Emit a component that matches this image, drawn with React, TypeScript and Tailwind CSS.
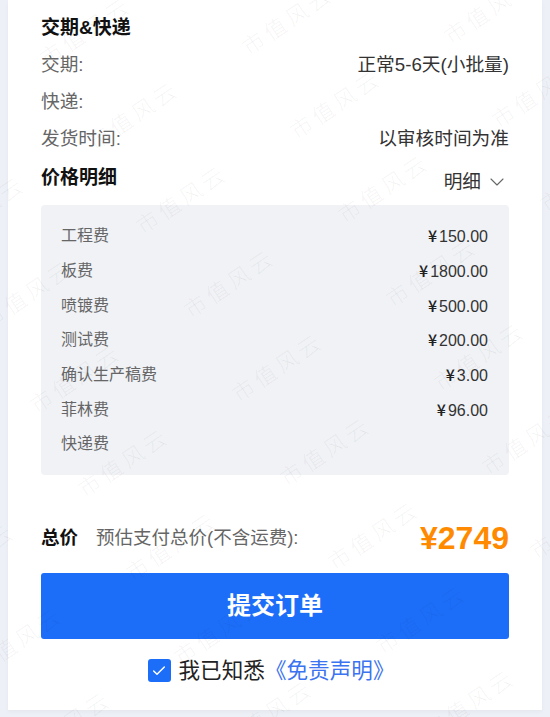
import { ChevronDown, Check } from 'lucide-react';

const delivery = [
  { label: '交期:', value: '正常5-6天(小批量)' },
  { label: '快递:', value: '' },
  { label: '发货时间:', value: '以审核时间为准' },
];

const fees = [
  { label: '工程费', value: '150.00' },
  { label: '板费', value: '1800.00' },
  { label: '喷镀费', value: '500.00' },
  { label: '测试费', value: '200.00' },
  { label: '确认生产稿费', value: '3.00' },
  { label: '菲林费', value: '96.00' },
  { label: '快递费', value: '' },
];

// watermark lattice, staggered like the original tiling
const marks: { x: number; y: number }[] = [];
for (let i = -4; i <= 4; i++) {
  for (let j = -6; j <= 8; j++) {
    const x = 182 + i * 250 + j * 48;
    const y = 200 + i * 73 + j * 84;
    if (x > -80 && x < 630 && y > -60 && y < 780) marks.push({ x, y });
  }
}

function Watermark() {
  return (
    <div className="pointer-events-none absolute inset-0 overflow-hidden">
      {marks.map((m, k) => (
        <span
          key={k}
          className="absolute -translate-x-1/2 -translate-y-1/2 -rotate-[34deg] whitespace-nowrap text-[22px] font-light tracking-[4px] text-black/[0.06]"
          style={{ left: m.x, top: m.y }}
        >
          市值风云
        </span>
      ))}
    </div>
  );
}

export default function App() {
  return (
    <div className="relative h-[717px] overflow-hidden bg-[#eef0f7] font-['Liberation_Sans','Noto_Sans_CJK_SC',sans-serif]">
      <div className="ml-2 w-[534px] bg-white px-[33px] pb-[23px] pt-[10px] shadow-[0_2px_4px_rgba(0,0,0,0.04)]">
        <div className="flex h-[37px] items-center text-[19px] font-bold text-[#111]">交期&amp;快递</div>
        {delivery.map((row) => (
          <div key={row.label} className="flex h-[37px] items-center justify-between text-[18.7px]">
            <span className="text-[#666]">{row.label}</span>
            <span className="text-[#333]">{row.value}</span>
          </div>
        ))}

        <div className="flex h-[40px] items-center justify-between">
          <span className="text-[19px] font-bold text-[#111]">价格明细</span>
          <span className="mt-[8px] flex items-center gap-[4px] text-[18.7px] text-[#333]">
            明细
            <ChevronDown size={24} strokeWidth={1.1} className="text-[#666]" />
          </span>
        </div>

        <div className="mt-[7px] rounded-[4px] bg-[#f0f2f6] px-5 pb-[13px] pt-[14px]">
          {fees.map((f) => (
            <div key={f.label} className="flex h-[34.7px] items-center justify-between text-[16px]">
              <span className="text-[#666]">{f.label}</span>
              {f.value && (
                <span className="mr-[1px] text-[#333]">
                  <span className="mr-[2px] font-['Noto_Sans_CJK_SC',sans-serif] font-medium text-[#222]">¥</span>
                  {f.value}
                </span>
              )}
            </div>
          ))}
        </div>

        <div className="mt-[43px] flex h-[40px] items-center justify-between">
          <div className="flex items-center gap-[18px] text-[18.5px]">
            <span className="font-bold text-[#111]">总价</span>
            <span className="text-[#666]">预估支付总价(不含运费):</span>
          </div>
          <span className="text-[32px] font-bold text-[#ff8a00]">¥2749</span>
        </div>

        <button className="mt-[15px] flex h-[66px] w-full items-center justify-center rounded-[3px] bg-[#1c6ef9] text-[24px] font-bold text-white">
          提交订单
        </button>

        <div className="mt-[16px] flex h-[32px] items-center justify-center gap-[8px] pr-2">
          <span className="flex h-[23px] w-[23px] items-center justify-center rounded-[3px] bg-[#1c6ef9]">
            <Check size={16} strokeWidth={2.2} className="text-white" />
          </span>
          <span className="text-[21.6px] text-[#222]">
            我已知悉<span className="text-[#3b73f0]">《免责声明》</span>
          </span>
        </div>
      </div>
      <Watermark />
    </div>
  );
}
